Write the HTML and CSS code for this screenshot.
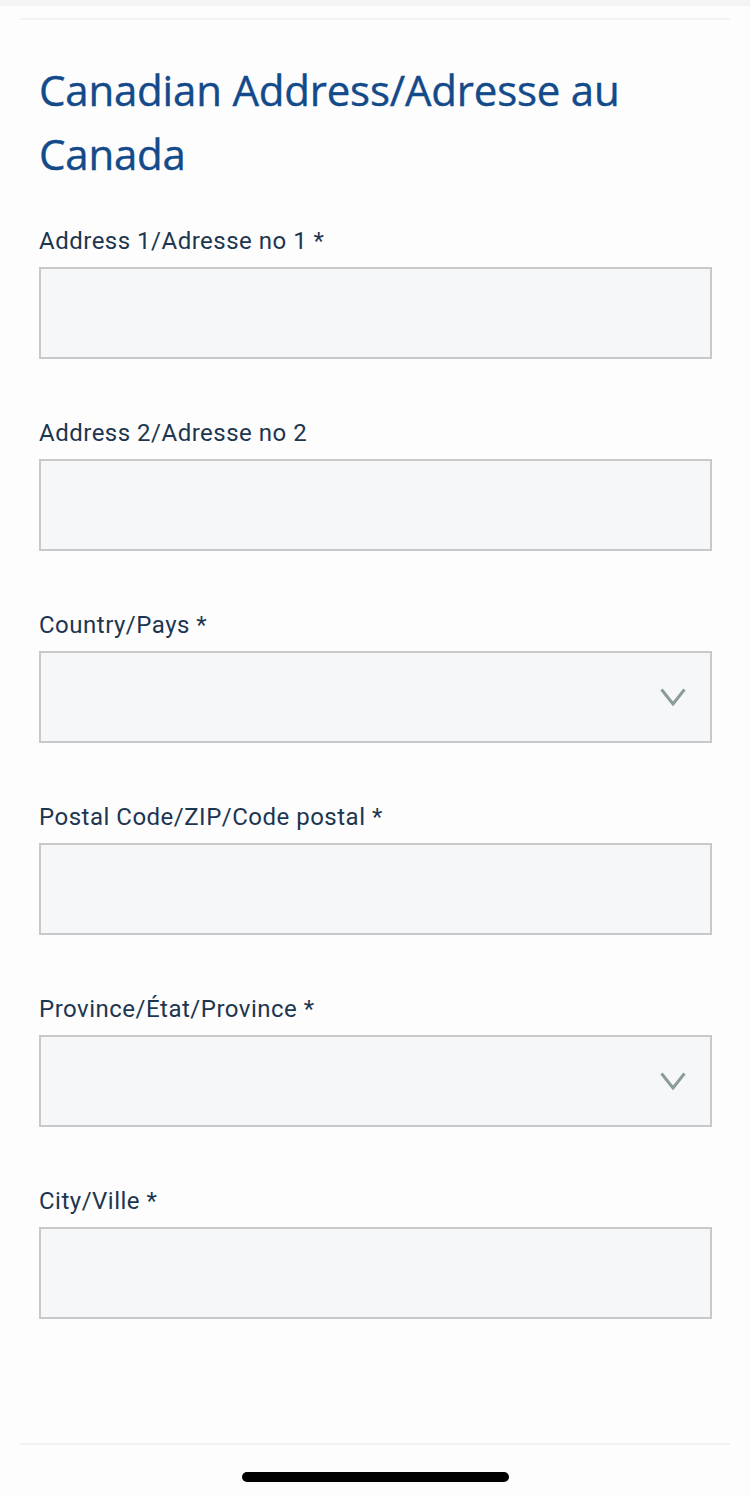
FILE: index.html
```html
<!DOCTYPE html>
<html lang="en">
<head>
<meta charset="utf-8">
<title>Canadian Address</title>
<link rel="stylesheet" href="styles.css">
</head>
<body>
<div class="page">
  <div class="top-strip"></div>
  <div class="top-rule"></div>
  <main class="content">
    <h1 class="title">Canadian Address/Adresse au Canada</h1>
    <form class="form">
      <div class="field">
        <label class="label">Address 1/Adresse no 1 *</label>
        <div class="input"></div>
      </div>
      <div class="field">
        <label class="label">Address 2/Adresse no 2</label>
        <div class="input"></div>
      </div>
      <div class="field">
        <label class="label">Country/Pays *</label>
        <div class="input select">
          <svg class="chevron" width="26" height="18" viewBox="0 0 26 18"><path d="M1.5 1.5 L13 16 L24.5 1.5" fill="none" stroke="#8a9c9c" stroke-width="3"/></svg>
        </div>
      </div>
      <div class="field">
        <label class="label">Postal Code/ZIP/Code postal *</label>
        <div class="input"></div>
      </div>
      <div class="field">
        <label class="label">Province/État/Province *</label>
        <div class="input select">
          <svg class="chevron" width="26" height="18" viewBox="0 0 26 18"><path d="M1.5 1.5 L13 16 L24.5 1.5" fill="none" stroke="#8a9c9c" stroke-width="3"/></svg>
        </div>
      </div>
      <div class="field">
        <label class="label">City/Ville *</label>
        <div class="input"></div>
      </div>
    </form>
  </main>
  <footer class="footer">
    <div class="bottom-rule"></div>
    <div class="home-area"><div class="home-indicator"></div></div>
  </footer>
</div>
</body>
</html>
```
FILE: styles.css
```css
html, body {
  margin: 0;
  padding: 0;
  background: #fdfdfd;
}
.page {
  width: 750px;
  height: 1496px;
  display: flex;
  flex-direction: column;
}
.top-strip {
  height: 6px;
  background: #f4f4f4;
}
.top-rule {
  height: 2px;
  margin: 12px 20px 0;
  background: #f3f3f3;
}
.content {
  flex: 1;
  padding: 0 39px;
}
.title {
  margin: 38px 0 0;
  font-family: "Open Sans", sans-serif;
  font-weight: 400;
  font-size: 42px;
  line-height: 64px;
  letter-spacing: -0.2px;
  color: #134a8a;
  -webkit-text-stroke: 0.4px #134a8a;
}
.form {
  display: flex;
  flex-direction: column;
  gap: 58px;
  margin-top: 39px;
}
.field {
  display: flex;
  flex-direction: column;
  gap: 10px;
}
.label {
  font-family: Roboto, "Liberation Sans", sans-serif;
  font-size: 24px;
  line-height: 32px;
  letter-spacing: 0.5px;
  color: #1d3650;
}
.input {
  box-sizing: border-box;
  height: 92px;
  width: 673px;
  border: 2px solid #c8c8c8;
  background: #f6f7f9;
  display: flex;
  align-items: center;
  justify-content: flex-end;
}
.chevron {
  margin-right: 24px;
}
.footer {
  display: flex;
  flex-direction: column;
}
.bottom-rule {
  height: 2px;
  margin: 0 20px;
  background: #f2f2f2;
}
.home-area {
  height: 51px;
  display: flex;
  justify-content: center;
  padding-top: 27px;
  box-sizing: border-box;
}
.home-indicator {
  width: 267px;
  height: 10px;
  border-radius: 5px;
  background: #000;
}
```
